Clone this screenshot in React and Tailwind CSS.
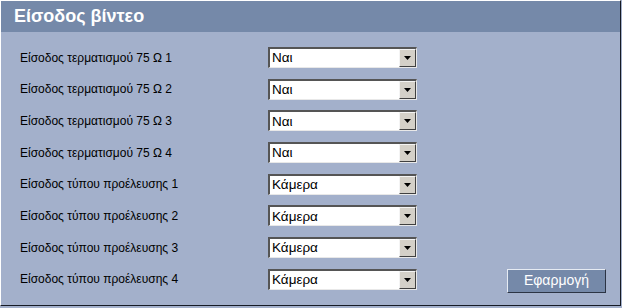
import React from "react";

const rows = [
  ["Είσοδος τερματισμού 75 Ω 1", "Ναι"],
  ["Είσοδος τερματισμού 75 Ω 2", "Ναι"],
  ["Είσοδος τερματισμού 75 Ω 3", "Ναι"],
  ["Είσοδος τερματισμού 75 Ω 4", "Ναι"],
  ["Είσοδος τύπου προέλευσης 1", "Κάμερα"],
  ["Είσοδος τύπου προέλευσης 2", "Κάμερα"],
  ["Είσοδος τύπου προέλευσης 3", "Κάμερα"],
  ["Είσοδος τύπου προέλευσης 4", "Κάμερα"],
];

function Select({ value }) {
  return (
    <div className="w-[149px] h-[21px] flex border-t-2 border-l-2 border-t-[#555] border-l-[#555] border-b border-r border-b-[#e8e8e8] border-r-[#e8e8e8] bg-white">
      <div className="flex-1 flex items-center pl-[2px] text-[13.5px] text-black leading-none">{value}</div>
      <div className="w-[17px] h-full bg-[#d4d0c8] border-t border-l border-t-[#f4f4f4] border-l-[#f4f4f4] border-b border-r border-b-[#404040] border-r-[#404040] flex items-center justify-center">
        <svg width="7" height="4" viewBox="0 0 7 4"><path d="M0 0h7L3.5 4z" fill="#000" /></svg>
      </div>
    </div>
  );
}

export default function App() {
  return (
    <div className="w-[622px] h-[308px] bg-[#a3b0cb]" style={{ fontFamily: '"Liberation Sans", Arial, sans-serif' }}>
      <div className="w-[621px] h-[306px] border-t border-l border-white border-r border-b border-r-[#151a24] border-b-[#151a24] flex flex-col">
        <div className="h-[31px] bg-[#7589a9] flex items-center pl-[13px] text-white font-bold text-[18px]">Είσοδος βίντεο</div>
        <div className="flex-1 bg-[#a3b0cb] pt-[15px] pl-[19px] flex flex-col gap-[10.7px]">
          {rows.map(([label, value], i) => (
            <div key={i} className="flex items-center h-[21px]">
              <div className="w-[248px] text-[12px] text-black">{label}</div>
              <Select value={value} />
              {i === rows.length - 1 && (
                <button className="ml-auto mr-[14px] mt-[3px] w-[99px] h-[24px] bg-[#7589a9] border-t border-l border-t-[#e6ebf3] border-l-[#e6ebf3] border-b border-r border-b-[#2c3444] border-r-[#2c3444] text-white text-[14px]">Εφαρμογή</button>
              )}
            </div>
          ))}
        </div>
      </div>
    </div>
  );
}
